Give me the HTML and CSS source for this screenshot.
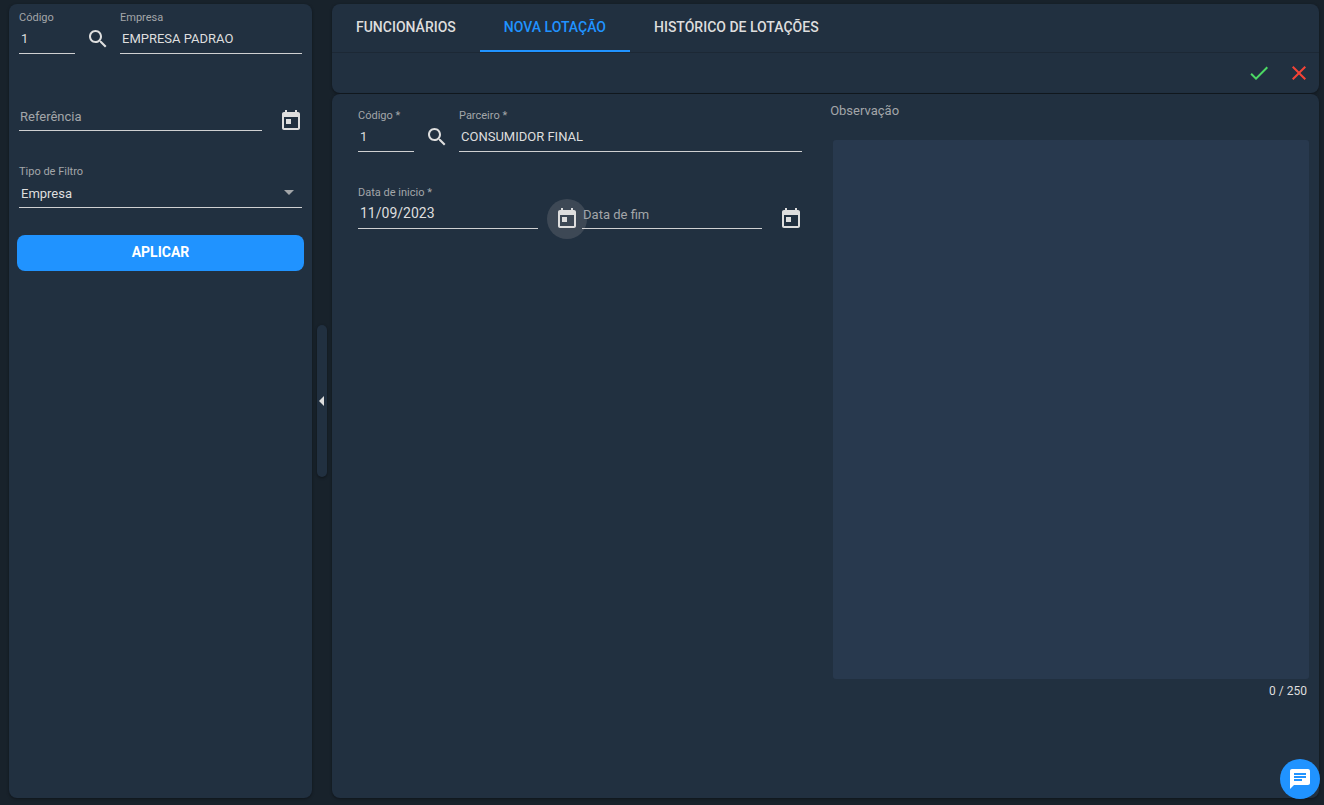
FILE: index.html
```html
<!DOCTYPE html>
<html lang="pt-BR">
<head>
    <meta charset="UTF-8">
    <meta name="viewport" content="width=device-width, initial-scale=1.0">
    <title>Nova Lotação</title>
    <link rel="stylesheet" href="styles.css">
</head>
<body>
    <div class="layout">
        <!-- Filtros -->
        <aside class="card sidebar">
            <form class="form">
                <div class="row">
                    <div class="field field-code">
                        <label for="empresaCodigo">Código</label>
                        <input type="text" id="empresaCodigo" value="1">
                    </div>
                    <button type="button" class="btn-search" aria-label="Pesquisar empresa">
                        <svg class="icon" viewBox="0 0 24 24"><path d="M15.5 14h-.79l-.28-.27C15.41 12.59 16 11.11 16 9.5 16 5.91 13.09 3 9.5 3S3 5.91 3 9.5 5.91 16 9.5 16c1.61 0 3.09-.59 4.23-1.57l.27.28v.79l5 4.99L20.49 19l-4.99-5zm-6 0C7.01 14 5 11.99 5 9.5S7.01 5 9.5 5 14 7.01 14 9.5 11.99 14 9.5 14z"/></svg>
                    </button>
                    <div class="field">
                        <label for="empresa">Empresa</label>
                        <input type="text" id="empresa" value="EMPRESA PADRAO">
                    </div>
                </div>

                <div class="row row-dates">
                    <div class="field field-empty">
                        <label for="referencia">Referência</label>
                        <input type="text" id="referencia">
                    </div>
                    <button type="button" class="btn-date" aria-label="Abrir calendário">
                        <svg class="icon" viewBox="0 0 24 24"><path d="M19 3h-1V1h-2v2H8V1H6v2H5c-1.11 0-1.99.9-1.99 2L3 19c0 1.1.89 2 2 2h14c1.1 0 2-.9 2-2V5c0-1.1-.9-2-2-2zm0 16H5V8h14v11zM7 10h5v5H7z"/></svg>
                    </button>
                </div>

                <div class="field field-select">
                    <label for="tipoFiltro">Tipo de Filtro</label>
                    <select id="tipoFiltro">
                        <option>Empresa</option>
                    </select>
                    <svg class="icon select-arrow" viewBox="0 0 24 24"><path d="M7 10l5 5 5-5z"/></svg>
                </div>

                <button type="button" class="btn-apply">APLICAR</button>
            </form>
        </aside>

        <div class="splitter">
            <button type="button" class="splitter-handle" aria-label="Recolher filtros">
                <svg class="icon" viewBox="0 0 24 24"><path d="M14 7l-5 5 5 5z"/></svg>
            </button>
        </div>

        <main class="main">
            <div class="card">
                <nav class="tabs">
                    <a href="#funcionarios" class="tab">FUNCIONÁRIOS</a>
                    <a href="#nova-lotacao" class="tab active">NOVA LOTAÇÃO</a>
                    <a href="#historico" class="tab">HISTÓRICO DE LOTAÇÕES</a>
                </nav>
                <div class="toolbar">
                    <button type="button" class="btn-action confirm" aria-label="Salvar">
                        <svg class="icon" viewBox="0 0 24 24"><path d="M9 16.17L4.83 12l-1.42 1.41L9 19 21 7l-1.41-1.41z"/></svg>
                    </button>
                    <button type="button" class="btn-action cancel" aria-label="Cancelar">
                        <svg class="icon" viewBox="0 0 24 24"><path d="M19 6.41L17.59 5 12 10.59 6.41 5 5 6.41 10.59 12 5 17.59 6.41 19 12 13.41 17.59 19 19 17.59 13.41 12z"/></svg>
                    </button>
                </div>
            </div>

            <form class="card content">
                <div class="form content-fields">
                    <div class="row">
                        <div class="field field-code">
                            <label for="parceiroCodigo">Código *</label>
                            <input type="text" id="parceiroCodigo" value="1">
                        </div>
                        <button type="button" class="btn-search" aria-label="Pesquisar parceiro">
                            <svg class="icon" viewBox="0 0 24 24"><path d="M15.5 14h-.79l-.28-.27C15.41 12.59 16 11.11 16 9.5 16 5.91 13.09 3 9.5 3S3 5.91 3 9.5 5.91 16 9.5 16c1.61 0 3.09-.59 4.23-1.57l.27.28v.79l5 4.99L20.49 19l-4.99-5zm-6 0C7.01 14 5 11.99 5 9.5S7.01 5 9.5 5 14 7.01 14 9.5 11.99 14 9.5 14z"/></svg>
                        </button>
                        <div class="field">
                            <label for="parceiro">Parceiro *</label>
                            <input type="text" id="parceiro" value="CONSUMIDOR FINAL">
                        </div>
                    </div>

                    <div class="row row-dates">
                        <div class="field">
                            <label for="dataInicio">Data de inicio *</label>
                            <input type="text" id="dataInicio" class="input-date" value="11/09/2023">
                        </div>
                        <button type="button" class="btn-date focused" aria-label="Abrir calendário">
                            <svg class="icon" viewBox="0 0 24 24"><path d="M19 3h-1V1h-2v2H8V1H6v2H5c-1.11 0-1.99.9-1.99 2L3 19c0 1.1.89 2 2 2h14c1.1 0 2-.9 2-2V5c0-1.1-.9-2-2-2zm0 16H5V8h14v11zM7 10h5v5H7z"/></svg>
                        </button>
                        <div class="field field-empty">
                            <label for="dataFim">Data de fim</label>
                            <input type="text" id="dataFim">
                        </div>
                        <button type="button" class="btn-date" aria-label="Abrir calendário">
                            <svg class="icon" viewBox="0 0 24 24"><path d="M19 3h-1V1h-2v2H8V1H6v2H5c-1.11 0-1.99.9-1.99 2L3 19c0 1.1.89 2 2 2h14c1.1 0 2-.9 2-2V5c0-1.1-.9-2-2-2zm0 16H5V8h14v11zM7 10h5v5H7z"/></svg>
                        </button>
                    </div>
                </div>

                <div class="notes">
                    <label for="observacao">Observação</label>
                    <textarea id="observacao" maxlength="250"></textarea>
                    <span class="counter">0 / 250</span>
                </div>
            </form>
        </main>
    </div>

    <button type="button" class="btn-chat" aria-label="Chat">
        <svg class="icon" viewBox="0 0 24 24"><path d="M20 2H4c-1.1 0-1.99.9-1.99 2L2 22l4-4h14c1.1 0 2-.9 2-2V4c0-1.1-.9-2-2-2zM6 9h12v2H6V9zm8 5H6v-2h8v2zm4-6H6V6h12v2z"/></svg>
    </button>
</body>
</html>
```

FILE: styles.css
```css
* {
    box-sizing: border-box;
}

body {
    margin: 0;
    background: #18222b;
    color: #dedede;
    font-family: Roboto, "Liberation Sans", sans-serif;
    font-size: 13px;
}

button, input, select, textarea {
    font: inherit;
    color: inherit;
    margin: 0;
    padding: 0;
    border: none;
    border-radius: 0;
    background: none;
    outline: none;
}

button {
    cursor: pointer;
}

.icon {
    display: block;
    flex: none;
    width: 24px;
    height: 24px;
    fill: currentColor;
}

.layout {
    display: flex;
    min-height: 100vh;
    padding: 4px 5px 7px 9px;
}

.card {
    background: #213040;
    border-radius: 8px;
    box-shadow: 0 1px 3px rgba(0, 0, 0, 0.4);
}

/* Sidebar */
.sidebar {
    flex: none;
    width: 303px;
    padding: 6px 10px;
}

.splitter {
    flex: none;
    width: 20px;
    display: flex;
    align-items: center;
    justify-content: center;
}

.splitter-handle {
    display: flex;
    align-items: center;
    justify-content: center;
    width: 10px;
    height: 152px;
    border-radius: 5px;
    background: #213040;
    box-shadow: 0 1px 3px rgba(0, 0, 0, 0.4);
}

/* Fields */
.form {
    display: flex;
    flex-direction: column;
    gap: 33px;
}

.row {
    display: flex;
    align-items: flex-end;
}

.row-dates {
    margin-right: -4px;
}

.field {
    flex: 1;
    min-width: 0;
    display: grid;
    grid-template-rows: 14px 30px;
}

.field-code {
    flex: none;
    width: 56px;
}

.field label {
    color: #a3a6a9;
    font-size: 11px;
    line-height: 16px;
}

.field input,
.field select {
    grid-area: 2 / 1;
    width: 100%;
    padding: 0 2px;
    border-bottom: 1px solid #cfd0d2;
}

.field select {
    appearance: none;
    padding-top: 2px;
}

.field .input-date {
    padding-bottom: 2px;
    font-size: 14px;
}

.field-empty label {
    grid-area: 2 / 1;
    padding-left: 1px;
    font-size: 13px;
    line-height: 32px;
}

.field-select {
    flex: none;
}

.select-arrow {
    grid-area: 2 / 1;
    justify-self: end;
    margin: 2px 1px;
    color: #a3a6a9;
    pointer-events: none;
}

/* Buttons */
.btn-search {
    display: flex;
    align-items: center;
    justify-content: center;
    width: 45px;
    height: 30px;
}

.btn-date {
    display: flex;
    align-items: center;
    justify-content: center;
    width: 40px;
    height: 40px;
    margin: 0 -5px -10px 9px;
    border-radius: 50%;
}

.btn-date.focused {
    background: #3d4855;
}

.btn-apply {
    height: 36px;
    margin: -6px -2px 0;
    padding-bottom: 2px;
    border-radius: 8px;
    background: #2093ff;
    color: white;
    font-size: 14px;
    font-weight: 700;
}

/* Main */
.main {
    flex: 1;
    min-width: 0;
    display: flex;
    flex-direction: column;
    gap: 1px;
}

.tabs {
    display: flex;
    border-bottom: 1px solid #1c2835;
}

.tab {
    height: 48px;
    padding: 0 24px;
    border-bottom: 2px solid transparent;
    color: #dedede;
    font-size: 14px;
    font-weight: 500;
    line-height: 46px;
    text-decoration: none;
}

.tab.active {
    color: #2093ff;
    border-bottom-color: #2093ff;
}

.toolbar {
    display: flex;
    justify-content: flex-end;
}

.btn-action {
    display: flex;
    align-items: center;
    justify-content: center;
    width: 40px;
    height: 40px;
}

.confirm {
    color: #4cd964;
}

.cancel {
    color: #f44336;
}

.content {
    flex: 1;
    display: grid;
    grid-template-columns: 14fr 15fr;
    align-items: start;
    gap: 31px;
    padding: 8px 10px 8px 26px;
}

.content-fields {
    padding-top: 6px;
}

.notes {
    display: flex;
    flex-direction: column;
}

.notes label {
    margin: 0 0 20px -3px;
    color: #a3a6a9;
    line-height: 18px;
}

.notes textarea {
    width: 100%;
    height: 67vh;
    padding: 8px;
    border-radius: 3px;
    background: #28394e;
    resize: none;
}

.counter {
    padding: 4px 2px;
    font-size: 12px;
    line-height: 16px;
    text-align: right;
}

.btn-chat {
    position: fixed;
    right: 4px;
    bottom: 6px;
    display: flex;
    align-items: center;
    justify-content: center;
    width: 40px;
    height: 40px;
    border-radius: 50%;
    background: #2093ff;
    color: white;
}
```
